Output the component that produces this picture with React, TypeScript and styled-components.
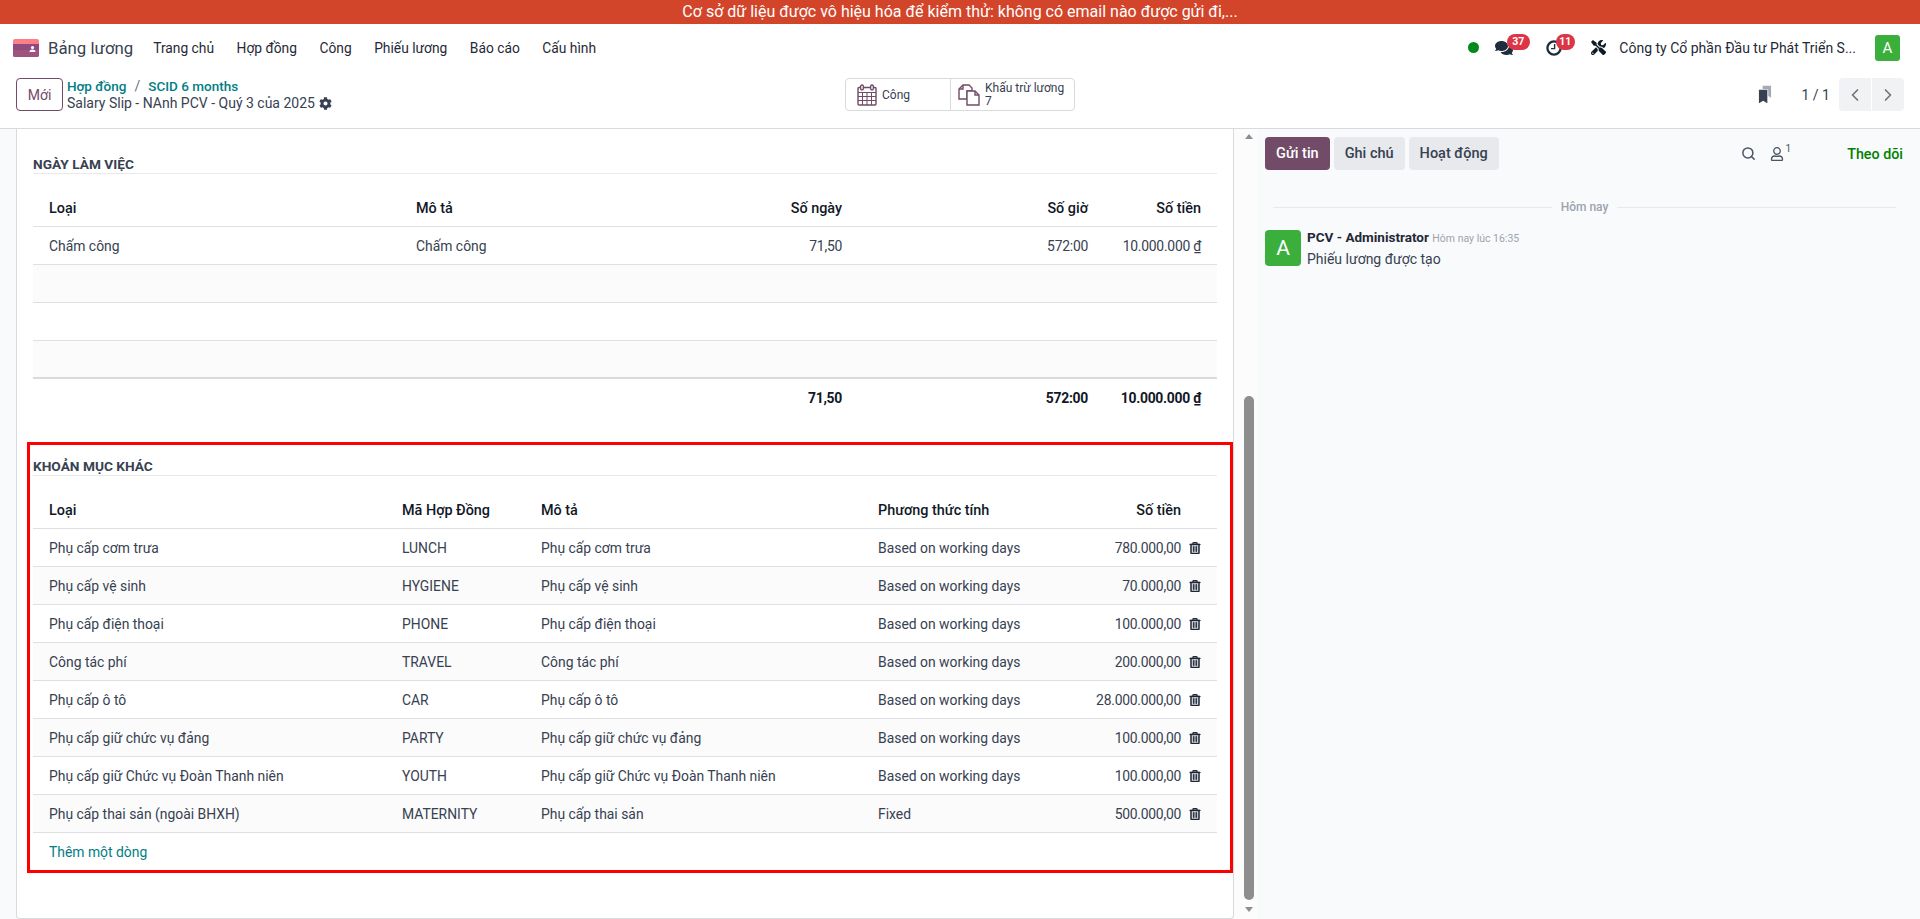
import { createGlobalStyle, styled } from 'styled-components';
import { FaCog, FaComments, FaRegTrashAlt, FaTools, FaRegUser } from 'react-icons/fa';
import { FiChevronLeft, FiChevronRight, FiSearch } from 'react-icons/fi';

const NAV_ITEMS = ['Trang chủ', 'Hợp đồng', 'Công', 'Phiếu lương', 'Báo cáo', 'Cấu hình'];

const EXTRA_ROWS = [
  ['Phụ cấp cơm trưa', 'LUNCH', 'Phụ cấp cơm trưa', 'Based on working days', '780.000,00'],
  ['Phụ cấp vệ sinh', 'HYGIENE', 'Phụ cấp vệ sinh', 'Based on working days', '70.000,00'],
  ['Phụ cấp điện thoại', 'PHONE', 'Phụ cấp điện thoại', 'Based on working days', '100.000,00'],
  ['Công tác phí', 'TRAVEL', 'Công tác phí', 'Based on working days', '200.000,00'],
  ['Phụ cấp ô tô', 'CAR', 'Phụ cấp ô tô', 'Based on working days', '28.000.000,00'],
  ['Phụ cấp giữ chức vụ đảng', 'PARTY', 'Phụ cấp giữ chức vụ đảng', 'Based on working days', '100.000,00'],
  ['Phụ cấp giữ Chức vụ Đoàn Thanh niên', 'YOUTH', 'Phụ cấp giữ Chức vụ Đoàn Thanh niên', 'Based on working days', '100.000,00'],
  ['Phụ cấp thai sản (ngoài BHXH)', 'MATERNITY', 'Phụ cấp thai sản', 'Fixed', '500.000,00'],
];

const GlobalStyle = createGlobalStyle`
  html, body {
    margin: 0;
    height: 100%;
    overflow: hidden;
  }
  body {
    font-family: 'Roboto', 'Noto Sans', sans-serif;
    font-size: 14px;
    color: #374151;
    background: #fff;
  }
  * {
    box-sizing: border-box;
  }
`;

function App() {
  return (
    <Page>
      <GlobalStyle />
      <Banner>Cơ sở dữ liệu được vô hiệu hóa để kiểm thử: không có email nào được gửi đi,...</Banner>
      <NavBar>
        <Brand>
          <svg width="26" height="18" viewBox="0 0 26 18">
            <path d="M2 0h22a2 2 0 0 1 2 2v3H0V2a2 2 0 0 1 2-2z" fill="#fb7f86" />
            <path d="M0 5h26v11a2 2 0 0 1-2 2H2a2 2 0 0 1-2-2z" fill="#8f4a80" />
            <path d="M0 11h26v5a2 2 0 0 1-2 2H2a2 2 0 0 1-2-2z" fill="#a0527f" />
            <circle cx="19.5" cy="8.5" r="1.6" fill="#fff" />
            <path d="M16.5 13c0-2 1.3-2.6 3-2.6s3 .6 3 2.6z" fill="#fff" />
          </svg>
          <BrandName>Bảng lương</BrandName>
        </Brand>
        <NavMenu>
          {NAV_ITEMS.map((item) => (
            <NavLink key={item}>{item}</NavLink>
          ))}
        </NavMenu>
        <SysTray>
          <PresenceDot />
          <TrayIcon $width={40}>
            <FaComments size={18} color="#1f2d3d" />
            <CountBadge $left={11.5} $width={23}>37</CountBadge>
          </TrayIcon>
          <TrayIcon $width={35}>
            <svg width="16" height="16" viewBox="0 0 16 16" fill="none" stroke="#1f2d3d">
              <circle cx="8" cy="8" r="6.6" strokeWidth="2.3" />
              <path d="M8.6 4v4.6H5" strokeWidth="1.4" />
            </svg>
            <CountBadge $left={10} $width={19}>11</CountBadge>
          </TrayIcon>
          <FaTools size={15} color="#111827" />
          <CompanyName>Công ty Cổ phần Đầu tư Phát Triển S...</CompanyName>
          <UserAvatar>A</UserAvatar>
        </SysTray>
      </NavBar>
      <ControlPanel>
        <LeftControls>
          <NewButton>Mới</NewButton>
          <Breadcrumbs>
            <Crumbs>
              <CrumbLink>Hợp đồng</CrumbLink>
              <CrumbSep>/</CrumbSep>
              <CrumbLink>SCID 6 months</CrumbLink>
            </Crumbs>
            <RecordName>
              Salary Slip - NAnh PCV - Quý 3 của 2025 <FaCog size={13} color="#374151" />
            </RecordName>
          </Breadcrumbs>
        </LeftControls>
        <StatButtons>
          <StatButton $width={104}>
            <svg width="20" height="22" viewBox="0 0 20 22" fill="none" stroke="#714b67" strokeWidth="1.4">
              <rect x="1" y="3.5" width="18" height="17.5" rx="1" />
              <path d="M1 8.5h18M1 12.5h18M1 16.5h18M5.5 8.5V21M10 8.5V21M14.5 8.5V21" strokeWidth="1" />
              <rect x="3.6" y="1" width="2.8" height="5" rx="1.4" fill="#fff" />
              <rect x="13.6" y="1" width="2.8" height="5" rx="1.4" fill="#fff" />
            </svg>
            <span>Công</span>
          </StatButton>
          <StatButton $width={124}>
            <svg width="22" height="22" viewBox="0 0 22 22" fill="none" stroke="#714b67" strokeWidth="1.4">
              <path d="M5 1h6l3 3v3H9v8H1V5z" />
              <path d="M5 1v4H1" />
              <path d="M9 7h8l4 4v10H9z" fill="#fff" />
              <path d="M17 7v4h4" />
            </svg>
            <StatLabel>
              Khấu trừ lương
              <br />7
            </StatLabel>
          </StatButton>
        </StatButtons>
        <RightControls>
          <svg width="14" height="19" viewBox="0 0 15 24" preserveAspectRatio="none">
            <path d="M5 1h9v15l-3-2V7a2 2 0 0 0-2-2H5z" fill="#a5a9b2" />
            <path d="M1 6h9v17l-4.5-3L1 23z" fill="#374151" />
          </svg>
          <Pager>1 / 1</Pager>
          <PagerButtons>
            <PagerButton><FiChevronLeft size={20} /></PagerButton>
            <PagerButton><FiChevronRight size={20} /></PagerButton>
          </PagerButtons>
        </RightControls>
      </ControlPanel>
      <Content>
        <FormColumn>
          <Sheet>
            <SectionTitle>Ngày làm việc</SectionTitle>
            <Table>
              <WorkRow $head>
                <span>Loại</span>
                <span>Mô tả</span>
                <Right>Số ngày</Right>
                <Right>Số giờ</Right>
                <Right>Số tiền</Right>
              </WorkRow>
              <WorkRow>
                <span>Chấm công</span>
                <span>Chấm công</span>
                <Amount>71,50</Amount>
                <Amount>572:00</Amount>
                <Amount>10.000.000 ₫</Amount>
              </WorkRow>
              <WorkRow $striped />
              <WorkRow />
              <WorkRow $striped $last />
              <WorkRow $total>
                <span />
                <span />
                <Amount>71,50</Amount>
                <Amount>572:00</Amount>
                <Amount>10.000.000 ₫</Amount>
              </WorkRow>
            </Table>
            <Highlight>
              <SectionTitle>Khoản mục khác</SectionTitle>
              <Table>
                <ExtraRow $head>
                  <span>Loại</span>
                  <span>Mã Hợp Đồng</span>
                  <span>Mô tả</span>
                  <span>Phương thức tính</span>
                  <Right>Số tiền</Right>
                  <span />
                </ExtraRow>
                {EXTRA_ROWS.map((row, index) => (
                  <ExtraRow key={row[1]} $striped={index % 2 === 1}>
                    <span>{row[0]}</span>
                    <span>{row[1]}</span>
                    <span>{row[2]}</span>
                    <span>{row[3]}</span>
                    <Amount>{row[4]}</Amount>
                    <TrashCell>
                      <FaRegTrashAlt size={12} stroke="currentColor" strokeWidth={22} />
                    </TrashCell>
                  </ExtraRow>
                ))}
                <AddLine>Thêm một dòng</AddLine>
              </Table>
            </Highlight>
          </Sheet>
        </FormColumn>
        <ScrollTrack>
          <ArrowUp />
          <ScrollThumb />
          <ArrowDown />
        </ScrollTrack>
        <Chatter>
          <ChatterTopbar>
            <ChatterButton $primary>Gửi tin</ChatterButton>
            <ChatterButton>Ghi chú</ChatterButton>
            <ChatterButton>Hoạt động</ChatterButton>
            <ChatterTools>
              <FiSearch size={15} color="#4b5563" strokeWidth={2.4} />
              <Followers>
                <FaRegUser size={14} color="#4b5563" />
                <sup>1</sup>
              </Followers>
              <FollowLink>Theo dõi</FollowLink>
            </ChatterTools>
          </ChatterTopbar>
          <DateDivider>
            <DividerLine />
            <span>Hôm nay</span>
            <DividerLine />
          </DateDivider>
          <Message>
            <MessageAvatar>A</MessageAvatar>
            <div>
              <MessageHead>
                <strong>PCV - Administrator</strong> <small>Hôm nay lúc 16:35</small>
              </MessageHead>
              <MessageBody>Phiếu lương được tạo</MessageBody>
            </div>
          </Message>
        </Chatter>
      </Content>
    </Page>
  );
}

const Page = styled.div`
  display: flex;
  flex-direction: column;
  height: 100vh;
  overflow: hidden;
`;

const Banner = styled.div`
  height: 24px;
  flex: none;
  background: #d2452a;
  color: #fff;
  font-size: 16px;
  line-height: 24px;
  text-align: center;
`;

const NavBar = styled.div`
  display: flex;
  align-items: center;
  height: 47px;
  flex: none;
  padding: 0 20px 0 13px;
  color: #1f2937;
`;

const Brand = styled.div`
  display: flex;
  align-items: center;
  gap: 9px;
  margin-right: 20px;
`;

const BrandName = styled.span`
  font-size: 16.8px;
  color: #374151;
`;

const NavMenu = styled.div`
  display: flex;
  gap: 22.5px;
`;

const NavLink = styled.span`
  font-size: 13.8px;
  color: #1f2937;
`;

const SysTray = styled.div`
  display: flex;
  align-items: center;
  margin-left: auto;
`;

const PresenceDot = styled.span`
  width: 11px;
  height: 11px;
  border-radius: 50%;
  background: #008a1e;
  margin-right: 16.5px;
`;

const TrayIcon = styled.span<{ $width: number }>`
  position: relative;
  display: flex;
  align-items: center;
  width: ${(p) => p.$width}px;
  height: 24px;
  margin-right: 10.5px;
`;

const CountBadge = styled.span<{ $left: number; $width: number }>`
  position: absolute;
  left: ${(p) => p.$left}px;
  top: -2px;
  width: ${(p) => p.$width}px;
  height: 16px;
  border-radius: 8px;
  background: #dc3545;
  color: #fff;
  font-size: 10.5px;
  font-weight: 700;
  line-height: 16px;
  text-align: center;
`;

const CompanyName = styled.span`
  margin-left: 13px;
  font-size: 14px;
  color: #1f2937;
`;

const UserAvatar = styled.span`
  width: 25px;
  height: 26px;
  margin-left: 19px;
  border-radius: 3px;
  background: #3aaf3c;
  color: #fff;
  font-size: 15px;
  line-height: 26px;
  text-align: center;
`;

const ControlPanel = styled.div`
  display: grid;
  grid-template-columns: 1fr auto 1fr;
  align-items: center;
  height: 58px;
  flex: none;
  padding: 0 16px 10px 16px;
  border-bottom: 1px solid #d8dadd;
`;

const LeftControls = styled.div`
  display: flex;
  align-items: center;
  gap: 4px;
`;

const NewButton = styled.button`
  width: 47px;
  height: 33px;
  border: 1px solid #714b67;
  border-radius: 4px;
  background: #fff;
  color: #714b67;
  font: inherit;
  font-size: 14px;
`;

const Breadcrumbs = styled.div`
  display: flex;
  flex-direction: column;
  line-height: 17px;
`;

const Crumbs = styled.div`
  display: flex;
  gap: 8px;
`;

const CrumbLink = styled.span`
  color: #017e84;
  font-size: 13.5px;
  font-weight: 500;
`;

const CrumbSep = styled.span`
  color: #6b7280;
`;

const RecordName = styled.div`
  display: flex;
  align-items: center;
  gap: 4px;
  color: #374151;
`;

const StatButtons = styled.div`
  display: flex;
  height: 33px;
  border: 1px solid #d8dadd;
  border-radius: 4px;
`;

const StatButton = styled.div<{ $width: number }>`
  display: flex;
  align-items: center;
  gap: 5px;
  width: ${(p) => p.$width}px;
  padding-left: 11px;
  font-size: 12px;
  color: #374151;
  & + & {
    border-left: 1px solid #d8dadd;
    padding-left: 7px;
  }
`;

const StatLabel = styled.span`
  line-height: 13px;
`;

const RightControls = styled.div`
  display: flex;
  align-items: center;
  justify-content: flex-end;
`;

const Pager = styled.span`
  margin: 0 9px 0 30px;
  font-size: 14px;
  color: #374151;
`;

const PagerButtons = styled.div`
  display: flex;
  gap: 1px;
`;

const PagerButton = styled.div`
  display: flex;
  align-items: center;
  justify-content: center;
  width: 32px;
  height: 33px;
  background: #f1f2f4;
  color: #6b7280;
  &:first-child {
    border-radius: 4px 0 0 4px;
  }
  &:last-child {
    border-radius: 0 4px 4px 0;
  }
`;

const Content = styled.div`
  display: flex;
  flex: 1;
  min-height: 0;
`;

const FormColumn = styled.div`
  width: 1234px;
  flex: none;
  padding-left: 16px;
  background: #f9fafb;
`;

const Sheet = styled.div`
  height: 100%;
  padding: 26px 16px 0;
  background: #fff;
  border: 1px solid #d8dadd;
  border-top: 0;
  border-radius: 0 0 4px 4px;
  font-size: 13.9px;
`;

const SectionTitle = styled.div`
  height: 19px;
  border-bottom: 1px solid #e7e9ed;
  color: #374151;
  font-size: 13.7px;
  font-weight: 700;
  line-height: 18px;
  text-transform: uppercase;
`;

const Table = styled.div`
  margin-top: 16px;
`;

const Right = styled.span`
  text-align: right;
`;

const Amount = styled(Right)`
  letter-spacing: -0.25px;
`;

type RowProps = { $head?: boolean; $striped?: boolean; $last?: boolean; $total?: boolean };

const Row = styled.div<RowProps>`
  display: grid;
  align-items: center;
  height: ${(p) => (p.$head ? 37 : 38)}px;
  padding: 0 16px;
  background: ${(p) => (p.$striped ? '#fbfbfb' : '#fff')};
  border-bottom: ${(p) => (p.$total ? 'none' : p.$last ? '2px' : '1px')} solid ${(p) => (p.$last ? '#d8dadd' : '#dee0e3')};
  color: ${(p) => (p.$head || p.$total ? '#111827' : '#374151')};
  font-size: ${(p) => (p.$head ? '14.4px' : 'inherit')};
  font-weight: ${(p) => (p.$head ? 500 : p.$total ? 700 : 400)};
`;

const WorkRow = styled(Row)`
  grid-template-columns: 367px 1fr 200px 246px 113px;
`;

const ExtraRow = styled(Row)`
  grid-template-columns: 353px 139px 337px 1fr 100px 20px;
`;

const TrashCell = styled.span`
  display: flex;
  justify-content: flex-end;
  color: #1f2937;
`;

const Highlight = styled.div`
  margin: 25px -16px 0 -6px;
  height: 431px;
  padding: 12px 13px 0 3px;
  border: 3px solid #ff0000;
`;

const AddLine = styled.div`
  height: 38px;
  padding-left: 16px;
  color: #017e84;
  line-height: 38px;
`;

const ScrollTrack = styled.div`
  display: flex;
  flex-direction: column;
  align-items: center;
  width: 23px;
  flex: none;
  padding: 5px 3px 7px 10px;
  background: #fcfcfd;
`;

const ArrowUp = styled.div`
  width: 0;
  height: 0;
  border: 4px solid transparent;
  border-top: 0;
  border-bottom: 5px solid #8e8e8e;
`;

const ArrowDown = styled.div`
  width: 0;
  height: 0;
  margin-top: auto;
  border: 4px solid transparent;
  border-bottom: 0;
  border-top: 5px solid #8e8e8e;
`;

const ScrollThumb = styled.div`
  width: 10px;
  height: 504px;
  margin-top: 257px;
  flex: none;
  border-radius: 5px;
  background: #8e8e8e;
`;

const Chatter = styled.div`
  flex: 1;
  padding: 8px 17px 0 8px;
  background: #f9fafb;
`;

const ChatterTopbar = styled.div`
  display: flex;
  gap: 4px;
`;

const ChatterButton = styled.button<{ $primary?: boolean }>`
  height: 33px;
  padding: 0 11px;
  border: 0;
  border-radius: 4px;
  background: ${(p) => (p.$primary ? '#714b67' : '#e7e9ed')};
  color: ${(p) => (p.$primary ? '#fff' : '#374151')};
  font: inherit;
  font-size: 14.5px;
  font-weight: 500;
`;

const ChatterTools = styled.div`
  display: flex;
  align-items: center;
  margin-left: auto;
`;

const Followers = styled.span`
  display: flex;
  align-items: center;
  margin: 0 56px 0 14px;
  color: #4b5563;
  & sup {
    font-size: 10px;
    margin: -10px 0 0 2px;
  }
`;

const FollowLink = styled.span`
  color: #008000;
  font-size: 14.3px;
  font-weight: 500;
`;

const DateDivider = styled.div`
  display: flex;
  align-items: center;
  gap: 9px;
  margin: 30px 7px 0 8px;
  color: #9ca3af;
  font-size: 12px;
  font-weight: 500;
`;

const DividerLine = styled.span`
  flex: 1;
  height: 1px;
  background: #e7e9ed;
`;

const Message = styled.div`
  display: flex;
  gap: 6px;
  margin-top: 16px;
`;

const MessageAvatar = styled.div`
  width: 36px;
  height: 36px;
  border-radius: 4px;
  background: #3aaf3c;
  color: #fff;
  font-size: 21px;
  line-height: 36px;
  text-align: center;
`;

const MessageHead = styled.div`
  line-height: 15px;
  color: #1f2937;
  & strong {
    font-weight: 700;
    font-size: 13.5px;
  }
  & small {
    color: #9ca3af;
    font-size: 10.5px;
  }
`;

const MessageBody = styled.div`
  margin-top: 5px;
  color: #374151;
`;

export default App;
